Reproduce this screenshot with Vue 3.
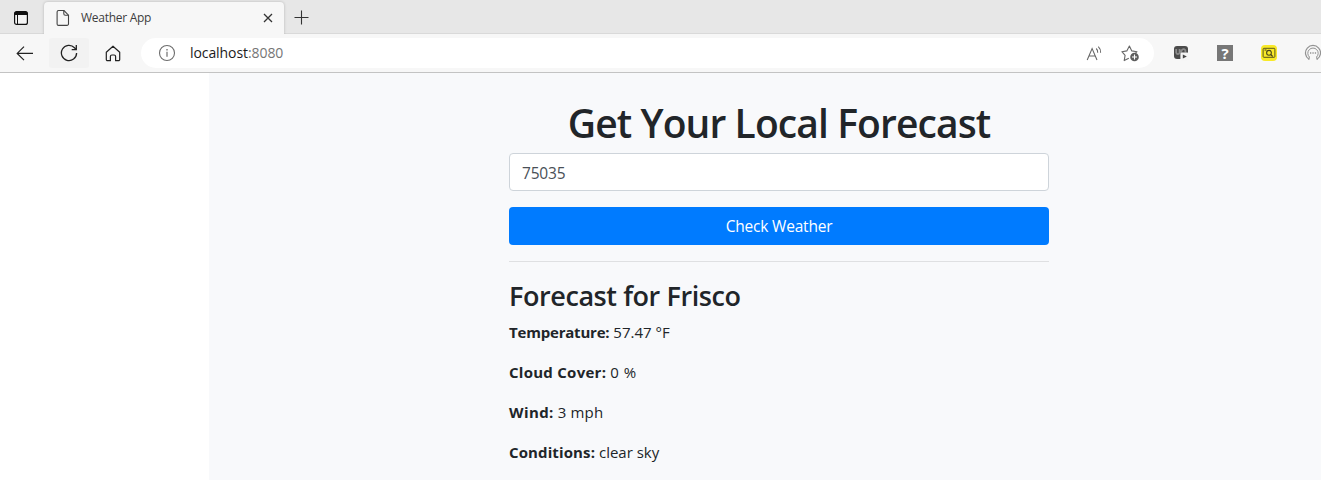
<script setup>
import { ref } from 'vue'

const zip = ref('75035')
const readings = [
  { label: 'Temperature:', value: '57.47 °F', name: 'temperature' },
  { label: 'Cloud Cover:', value: '0 %', name: 'cloud' },
  { label: 'Wind:', value: '3 mph', name: 'wind' },
  { label: 'Conditions:', value: 'clear sky', name: 'conditions' },
]
</script>

<template>
  <div class="browser">
    <header class="tabstrip">
      <div class="tab-actions">
        <svg width="16" height="16" viewBox="0 0 16 16">
          <rect x="1.6" y="1.6" width="12.8" height="12.8" rx="2" fill="#f4f4f4" stroke="#111" stroke-width="1.2" />
          <path d="M1.5 5V3.5a2 2 0 0 1 2-2h9a2 2 0 0 1 2 2V5z" fill="#111" />
          <path d="M4.5 5v9.4" stroke="#111" stroke-width="1" />
        </svg>
      </div>
      <div class="tab">
        <svg class="page-icon" width="14" height="18" viewBox="0 0 14 18" fill="none" stroke="#444" stroke-width="1.1">
          <path d="M2.6 1.5H8l4.5 4.6v8.8a1.5 1.5 0 0 1-1.5 1.5H2.6a1.5 1.5 0 0 1-1.5-1.5V3a1.5 1.5 0 0 1 1.5-1.5z" />
          <path d="M7.8 1.6v3.2a1.5 1.5 0 0 0 1.5 1.5h3.1" />
        </svg>
        <span class="tab-title">Weather App</span>
        <svg class="close" width="10" height="10" viewBox="0 0 10 10" stroke="#333" stroke-width="1.3">
          <path d="M1 1l8 8M9 1L1 9" />
        </svg>
      </div>
      <svg class="plus" width="15" height="15" viewBox="0 0 15 15" stroke="#333" stroke-width="1.1">
        <path d="M7.5 .5v14M.5 7.5h14" />
      </svg>
    </header>

    <nav class="toolbar">
      <div class="tool back">
        <svg width="18" height="16" viewBox="0 0 18 16" fill="none" stroke="#222" stroke-width="1.2">
          <path d="M17 8.4H1.4M8 1.6L1.2 8.4 8 15.2" />
        </svg>
      </div>
      <div class="tool reload">
        <svg width="18" height="18" viewBox="0 0 18 18" fill="none" stroke="#222" stroke-width="1.3">
          <path d="M16.6 9A7.6 7.6 0 1 1 14.5 3.7l1.4 1.5" />
          <path d="M16.3 1v4.6h-4.6" />
        </svg>
      </div>
      <div class="tool home">
        <svg width="16" height="17" viewBox="0 0 16 17" fill="none" stroke="#222" stroke-width="1.2" stroke-linejoin="round">
          <path d="M1.3 7.2L8 1.2l6.7 6v7.3a1.2 1.2 0 0 1-1.2 1.2h-2.9v-4.2A1.5 1.5 0 0 0 9.1 10H6.9a1.5 1.5 0 0 0-1.5 1.5v4.2H2.5a1.2 1.2 0 0 1-1.2-1.2z" />
        </svg>
      </div>
      <div class="address">
        <svg class="info" width="18" height="18" viewBox="0 0 18 18" fill="none" stroke="#6d6d6d">
          <circle cx="9" cy="9" r="7.5" stroke-width="1.1" />
          <path d="M9 7.7v5" stroke-width="1.2" />
          <path d="M9 5v1.5" stroke-width="1.3" />
        </svg>
        <span class="url">localhost<span class="port">:8080</span></span>
        <svg class="read" width="17" height="17" viewBox="0 0 17 17" fill="none" stroke="#666" stroke-width="1.05">
          <path d="M1.2 15L6.1 3.5 11 15M2.9 11h6.4" />
          <path d="M10.2 3.5a5 5 0 0 1 1.5 4.2M12.3 1.6a7.5 7.5 0 0 1 2.3 6.1" />
        </svg>
        <svg class="star" width="19" height="19" viewBox="0 0 19 19" fill="none" stroke="#666" stroke-width="1.1" stroke-linejoin="round">
          <path d="M7.8 14.2l-4.6 2.4.9-5.2L.9 7.7l4.9-.8L8.4 2l2.4 4.9 5.2.8-1.7 1.7" />
          <circle cx="13.5" cy="13" r="4.3" fill="#5c5c5c" stroke="none" />
          <path d="M13.5 10.5v5M11 13h5" stroke="#fff" />
        </svg>
      </div>
      <div class="extensions">
        <svg class="ext-media" width="16" height="16" viewBox="0 0 16 16">
          <rect x="1" y="1" width="14" height="13" rx="3" fill="#4b4b4b" />
          <path d="M3.2 4v3.8a1.8 2 0 0 0 3.4 0V4M8.6 8.5a2.2 2.8 0 1 1 3.8-3v2" fill="none" stroke="#8c8c8c" stroke-width="1.8" />
          <rect x="7.4" y="7.6" width="8.4" height="8" rx="1.5" fill="#f5f5f5" />
          <path d="M9.8 9.4v4l4-2z" fill="#444" />
        </svg>
        <span class="ext-help">?</span>
        <svg class="ext-search" width="18" height="18" viewBox="0 0 18 18">
          <rect x="1" y="1" width="16" height="16" rx="4" fill="#f8e928" />
          <rect x="3.1" y="4.3" width="11.8" height="9" rx=".8" fill="none" stroke="#5a551c" />
          <circle cx="9" cy="8.8" r="2.4" fill="none" stroke="#49451a" stroke-width="1.1" />
          <path d="M10.7 10.5l2 2M4.5 6h2" stroke="#49451a" stroke-width="1.1" />
        </svg>
        <svg class="ext-chat" width="18" height="18" viewBox="0 0 18 18" fill="none" stroke="#929292">
          <path d="M5 15.3a7.5 7.5 0 1 1 8 0" stroke-width="1.2" />
          <path d="M5.4 13a5.2 5.2 0 1 1 7.2 0M5.4 12.8l-.5 3M12.6 12.8l.5 3" />
          <path d="M6 9h1.3M8.4 9h1.3M10.8 9h1.3" stroke-width="1.3" />
        </svg>
      </div>
    </nav>

    <main class="viewport">
      <section class="panel">
        <div class="content">
          <h1>Get Your Local Forecast</h1>
          <input v-model="zip" class="field" type="text" />
          <button class="submit" type="button">Check Weather</button>
          <hr />
          <h2>Forecast for Frisco</h2>
          <p v-for="r in readings" :key="r.name" :class="r.name">
            <strong>{{ r.label }}</strong> <span>{{ r.value }}</span>
          </p>
        </div>
      </section>
    </main>
  </div>
</template>

<style>
body {
  margin: 0;
  background: #fff;
}
</style>

<style scoped>
* {
  box-sizing: border-box;
}
svg {
  display: block;
  flex: none;
}
.browser {
  height: 491px;
  overflow: hidden;
  background: #fff;
  font-family: "Open Sans", "Noto Sans", sans-serif;
}
.tabstrip {
  display: flex;
  height: 34px;
  background: #e7e7e7;
  border-bottom: 1px solid #d9d9d9;
}
.tab-actions {
  width: 44px;
  padding: 10px 0 0 13px;
}
.tab {
  display: flex;
  width: 240px;
  height: 32px;
  margin-top: 2px;
  padding: 7px 11px 0 12px;
  background: #f7f7f7;
  border-radius: 4px 4px 0 0;
  box-shadow: 0 0 3px rgba(0, 0, 0, 0.22);
  clip-path: inset(-3px -3px 0 -3px);
}
.tab-title {
  margin-left: 11px;
  color: #3d3d3d;
  font-size: 12px;
  line-height: 18px;
  letter-spacing: -0.28px;
}
.close {
  margin: 4px 0 0 auto;
}
.plus {
  margin: 10px 0 0 10px;
}
.toolbar {
  display: flex;
  height: 39px;
  padding: 4px 0 0 1px;
  background: #f7f7f7;
  border-bottom: 1px solid #c3c3c3;
}
.tool {
  display: flex;
  flex: none;
  align-items: center;
  justify-content: center;
  height: 30px;
}
.back {
  width: 48px;
}
.reload {
  width: 40px;
  background: #f2f2f2;
  border-radius: 3px;
}
.home {
  width: 48px;
}
.address {
  display: flex;
  flex: none;
  align-items: center;
  width: 1013px;
  height: 30px;
  margin-left: 4px;
  padding: 0 14px 0 17px;
  background: #fff;
  border-radius: 15px;
}
.url {
  margin: 0 auto 0 14px;
  color: #1b1b1b;
  font-size: 14px;
  line-height: 20px;
  letter-spacing: -0.08px;
}
.port {
  color: #767676;
}
.star {
  margin-left: 18px;
}
.extensions {
  display: flex;
  flex: none;
  align-items: center;
  height: 30px;
  margin-left: 19px;
}
.ext-help {
  width: 16px;
  height: 16px;
  margin-left: 28px;
  background: #777;
  color: #fff;
  font: bold 15px/16px "Open Sans", sans-serif;
  text-align: center;
}
.ext-search {
  margin-left: 27px;
}
.ext-chat {
  margin-left: 26px;
}
.viewport {
  height: 407px;
  padding-left: 209px;
}
.panel {
  height: 407px;
  padding: 26px 0 0 300px;
  overflow: hidden;
  background: #f8f9fb;
  color: #212529;
}
.content {
  width: 540px;
}
h1 {
  margin: 0 0 6px;
  font-size: 39px;
  font-weight: 600;
  line-height: 48px;
  text-align: center;
  white-space: nowrap;
  letter-spacing: -0.9px;
}
.field {
  display: block;
  width: 540px;
  height: 38px;
  margin: 0;
  padding: 1px 12px 0;
  border: 1px solid #ced4da;
  border-radius: 4px;
  background: #fff;
  color: #495057;
  font: 15.5px/24px "Open Sans", sans-serif;
  letter-spacing: -0.2px;
  outline: none;
}
.submit {
  display: block;
  width: 540px;
  height: 38px;
  margin: 16px 0;
  padding: 0;
  border: 0;
  border-radius: 4px;
  background: #007bff;
  color: #fff;
  font: 15.5px/38px "Open Sans", sans-serif;
  letter-spacing: -0.2px;
}
hr {
  height: 1px;
  margin: 0 0 17px;
  border: 0;
  background: #dfe0e2;
}
h2 {
  margin: 0 0 7px;
  font-size: 27px;
  font-weight: 600;
  line-height: 34px;
  letter-spacing: -0.42px;
}
p {
  margin: 0 0 16px;
  font-size: 15px;
  line-height: 24px;
  white-space: nowrap;
}
.temperature strong {
  letter-spacing: -0.2px;
}
.cloud strong {
  letter-spacing: 0.27px;
}
.cloud span {
  letter-spacing: 0.6px;
}
.wind strong {
  letter-spacing: 0.4px;
}
.wind span {
  letter-spacing: 0.2px;
}
.conditions strong {
  letter-spacing: 0.12px;
}
</style>
